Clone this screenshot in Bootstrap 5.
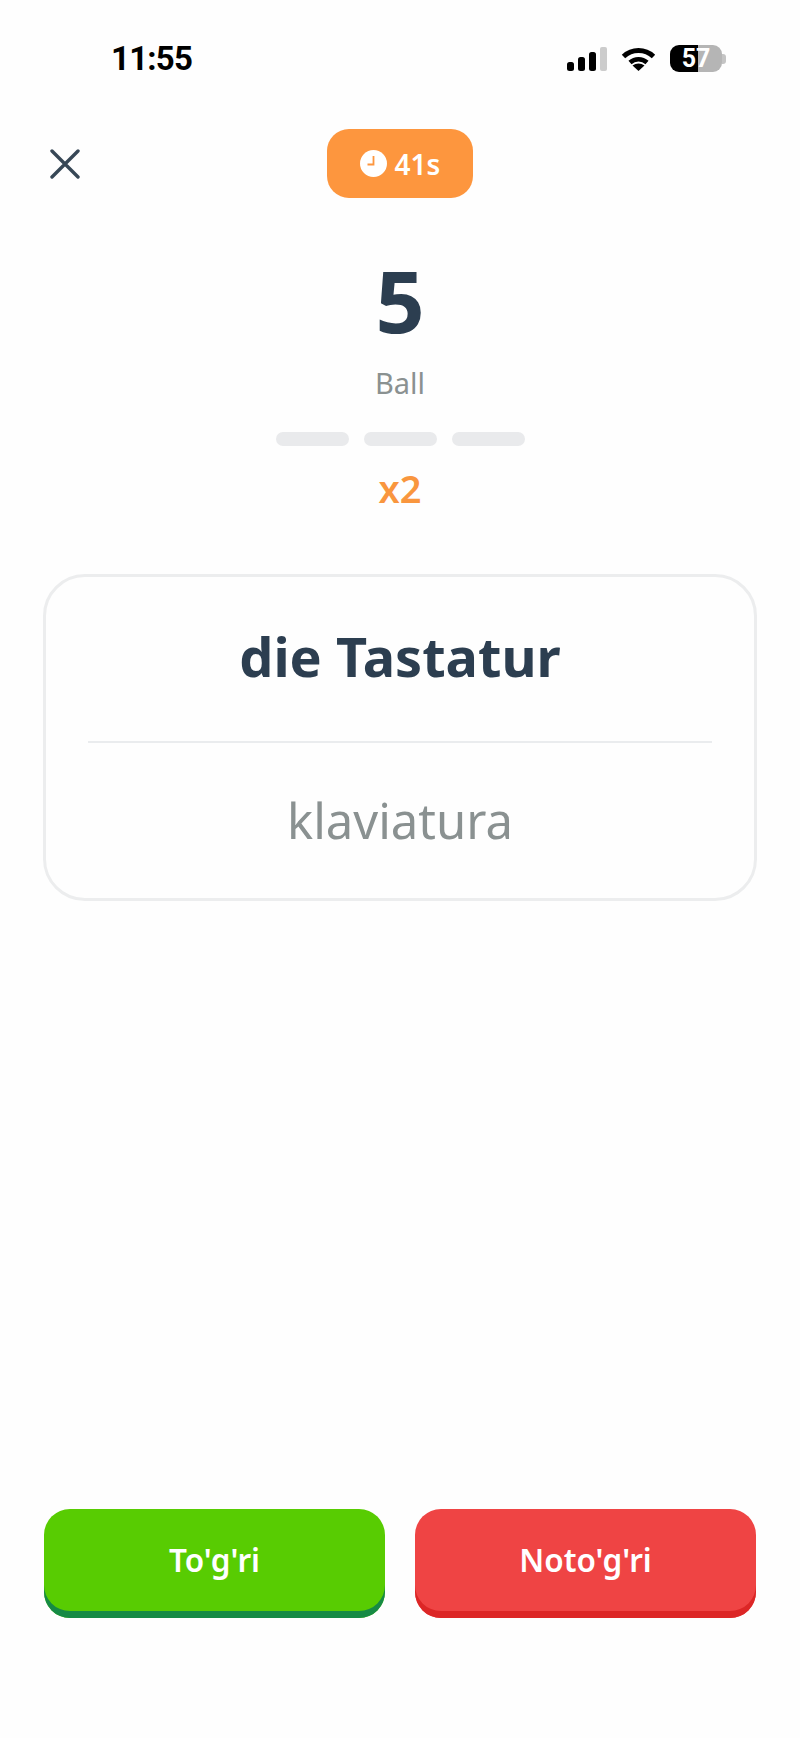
<!DOCTYPE html>
<html lang="uz">
<head>
    <meta charset="UTF-8">
    <title>Flashcards</title>
    <link href="https://cdn.jsdelivr.net/npm/bootstrap@5.3.3/dist/css/bootstrap.min.css" rel="stylesheet">
    <style>
        body {
            background-color: #fefefe;
            font-family: "Noto Sans", "Lato", sans-serif;
            color: #2c3e50;
        }
        .screen {
            height: 1738px;
            padding: 45px 44px 120px;
        }
        .status-bar {
            height: 27px;
            padding: 0 30px 0 67px;
            color: #000;
        }
        .status-time {
            font: 700 33px/27px "Roboto", sans-serif;
            letter-spacing: -.8px;
        }
        .status-icons {
            gap: 14px;
        }
        .battery {
            width: 52px;
            height: 27px;
            border-radius: 9px;
            background: linear-gradient(90deg, #000 54%, #b5b5b5 54%);
            color: #fff;
            font: 700 25px/27px "Roboto", sans-serif;
            text-align: center;
        }
        .battery-nub {
            width: 4px;
            height: 10px;
            border-radius: 0 3px 3px 0;
            background-color: #c4c4c4;
        }
        .top-row {
            margin-top: 57px;
            height: 69px;
        }
        .top-side {
            flex: 1 1 0;
        }
        .close-icon {
            margin-left: 5px;
        }
        .timer-pill {
            width: 146px;
            height: 69px;
            border-radius: 22px;
            background-color: #fd963e;
            color: #fff;
            font-size: 28px;
            font-weight: 600;
        }
        .score-value {
            margin-top: 58px;
            font-size: 86px;
            line-height: 88px;
            font-weight: 700;
        }
        .score-label {
            margin-top: 22px;
            font-size: 29px;
            line-height: 34px;
            color: #8a9191;
        }
        .streak-bars {
            margin-top: 32px;
            gap: 15px;
        }
        .streak-bar {
            width: 73px;
            height: 14px;
            border-radius: 7px;
            background-color: #e9eaec;
        }
        .streak-multi {
            margin-top: 19px;
            font-size: 38px;
            line-height: 46px;
            font-weight: 600;
            color: #f9963e;
        }
        .word-card {
            margin: 63px -1px 0;
            height: 327px;
            padding: 0 42px;
            border: 3px solid #ecedee;
            border-radius: 42px;
            background-color: #fefefe;
        }
        .word-main {
            height: 166px;
            padding-bottom: 6px;
            font-size: 54px;
            font-weight: 700;
            border-bottom: 2px solid #eaecee;
        }
        .word-sub {
            flex: 1 1 0;
            font-size: 49px;
            color: #8a9191;
        }
        .answer-row {
            gap: 30px;
        }
        .answer-btn {
            flex: 1 1 0;
            height: 109px;
            border: 0;
            border-radius: 26px;
            color: #fff;
            font-size: 31.5px;
            font-weight: 600;
            padding: 0 0 7px;
        }
        .answer-yes {
            background-color: #58cc02;
            box-shadow: inset 0 -7px 0 #168a45;
        }
        .answer-no {
            background-color: #ef4444;
            box-shadow: inset 0 -7px 0 #dc2626;
        }
    </style>
</head>
<body>
    <div class="screen d-flex flex-column">
        <div class="status-bar d-flex align-items-center justify-content-between">
            <span class="status-time">11:55</span>
            <div class="status-icons d-flex align-items-center">
                <svg width="40" height="24" viewBox="0 0 40 24">
                    <rect x="0" y="15" width="7" height="9" rx="2.5" fill="#000"/>
                    <rect x="11" y="10" width="7" height="14" rx="2.5" fill="#000"/>
                    <rect x="22" y="5" width="7" height="19" rx="2.5" fill="#000"/>
                    <rect x="33" y="0" width="7" height="24" rx="2" fill="#ccc"/>
                </svg>
                <svg width="35" height="24" viewBox="0 0 35 24">
                    <path d="M2.5 9.5C11 1.5 24 1.5 32.5 9.5" fill="none" stroke="#000" stroke-width="5"/>
                    <path d="M9 15.5C13.8 11.2 21.2 11.2 26 15.5" fill="none" stroke="#000" stroke-width="4.6"/>
                    <path d="M17.500 24L11.500 18.500C15 15.700 20 15.700 23.500 18.500Z" fill="#000"/>
                </svg>
                <div class="d-flex align-items-center">
                    <div class="battery">57</div>
                    <div class="battery-nub"></div>
                </div>
            </div>
        </div>

        <div class="top-row d-flex align-items-center">
            <div class="top-side">
                <svg width="32" height="30" viewBox="0 0 32 30" class="close-icon d-block">
                    <path d="M3 2L29 28M29 2L3 28" fill="none" stroke="#374756" stroke-width="3.4" stroke-linecap="round"/>
                </svg>
            </div>
            <div class="timer-pill d-flex align-items-center justify-content-center gap-2">
                <svg width="27" height="27" viewBox="0 0 27 27">
                    <circle cx="13.500" cy="13.500" r="13.500" fill="#fff"/>
                    <path d="M13.500 6V14.500H7.500" fill="none" stroke="#fd963e" stroke-width="1.800"/>
                </svg>
                <span>41s</span>
            </div>
            <div class="top-side"></div>
        </div>

        <div class="score-value text-center">5</div>
        <div class="score-label text-center">Ball</div>
        <div class="streak-bars d-flex justify-content-center">
            <div class="streak-bar"></div>
            <div class="streak-bar"></div>
            <div class="streak-bar"></div>
        </div>
        <div class="streak-multi text-center">x2</div>

        <div class="word-card d-flex flex-column">
            <div class="word-main d-flex align-items-center justify-content-center">die Tastatur</div>
            <div class="word-sub d-flex align-items-center justify-content-center">klaviatura</div>
        </div>

        <div class="answer-row d-flex mt-auto">
            <button type="button" class="answer-btn answer-yes">To'g'ri</button>
            <button type="button" class="answer-btn answer-no">Noto'g'ri</button>
        </div>
    </div>
    <script src="https://cdn.jsdelivr.net/npm/bootstrap@5.3.3/dist/js/bootstrap.bundle.min.js"></script>
</body>
</html>
